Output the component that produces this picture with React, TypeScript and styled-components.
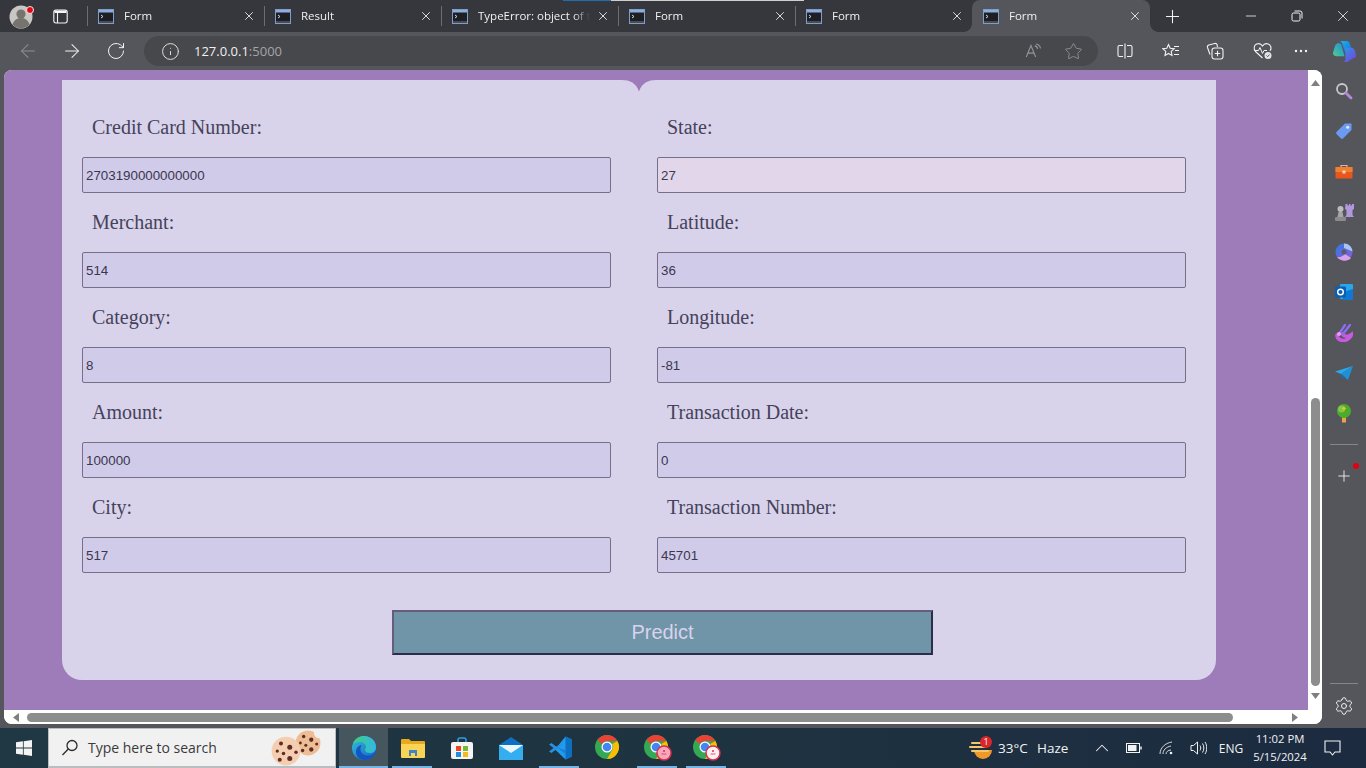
import React from 'react';
import styled, { createGlobalStyle, css } from 'styled-components';
import { ArrowLeft, ArrowRight, RotateCw, Info, Star, X, Plus, Minus, ChevronUp, Settings } from 'lucide-react';

const GlobalStyle = createGlobalStyle`
  html, body {
    margin: 0;
    padding: 0;
    width: 1366px;
    height: 768px;
    overflow: hidden;
    background: #55565b;
  }
  * { box-sizing: border-box; }
`;

const uiFont = `"Open Sans", "Noto Sans", "Liberation Sans", sans-serif`;

const Screen = styled.div`
  position: relative;
  width: 1366px;
  height: 768px;
  display: flex;
  flex-direction: column;
  font-family: ${uiFont};
  background: #55565b;
`;

const TabStrip = styled.div`
  height: 32px;
  display: flex;
  align-items: stretch;
  background: #36373c;
  flex: none;
`;

const LoadLine = styled.div`
  position: absolute;
  left: 563px;
  top: 0;
  width: 241px;
  height: 1px;
  background: linear-gradient(to right, #1d6fb0 0 48px, #cfcfcf 48px);
`;

const StripCell = styled.div<{ $w: number }>`
  width: ${(p) => p.$w}px;
  flex: none;
  display: flex;
  align-items: center;
  justify-content: center;
  color: #f2f2f2;
  position: relative;
`;

const PanelCell = styled(StripCell)`
  margin-right: 11px;
`;

const Spacer = styled.div`
  flex: 1;
`;

const activeFlares = css`
  &::before,
  &::after {
    content: '';
    position: absolute;
    bottom: 0;
    width: 8px;
    height: 8px;
  }
  &::before {
    left: -8px;
    background: radial-gradient(circle at 0 0, transparent 7.5px, #55565b 8px);
  }
  &::after {
    right: -8px;
    background: radial-gradient(circle at 100% 0, transparent 7.5px, #55565b 8px);
  }
`;

const tabDivider = css`
  &::before {
    content: '';
    position: absolute;
    left: 0;
    top: 6px;
    width: 1px;
    height: 20px;
    background: #6d6e72;
  }
`;

const Tab = styled.div<{ $active?: boolean }>`
  position: relative;
  flex: none;
  width: ${(p) => (p.$active ? 178 : 177)}px;
  display: flex;
  align-items: center;
  padding-left: 11px;
  color: #f0f0f0;
  background: ${(p) => (p.$active ? '#55565b' : 'transparent')};
  border-radius: ${(p) => (p.$active ? '8px 8px 0 0' : '0')};
  ${(p) => (p.$active ? activeFlares : tabDivider)}
`;

const TabTitle = styled.span`
  margin-left: 10px;
  width: 112px;
  font-size: 11.5px;
  line-height: 16px;
  white-space: nowrap;
  overflow: hidden;
  -webkit-mask-image: linear-gradient(to right, #000 85%, transparent);
  mask-image: linear-gradient(to right, #000 85%, transparent);
`;

const TabClose = styled.span`
  position: absolute;
  right: 8px;
  top: 9px;
  display: flex;
  color: #f0f0f0;
`;

const Toolbar = styled.div`
  height: 38px;
  display: flex;
  align-items: center;
  padding-left: 6px;
  background: #55565b;
  flex: none;
`;

const NavButton = styled.div<{ $muted?: boolean; $w?: number }>`
  width: ${(p) => p.$w ?? 44}px;
  height: 30px;
  flex: none;
  display: flex;
  align-items: center;
  justify-content: center;
  color: ${(p) => (p.$muted ? '#8e8f93' : '#f2f2f2')};
`;

const CopilotSlot = styled(NavButton)`
  padding-left: 10px;
`;

const Omnibox = styled.div`
  width: 954px;
  height: 30px;
  margin: 0 4px 0 6px;
  flex: none;
  display: flex;
  align-items: center;
  border-radius: 15px;
  background: #47484c;
  padding: 0 5px 0 17px;
`;

const InfoSlot = styled.span`
  display: flex;
  width: 33px;
  color: #e6e6e6;
`;

const Url = styled.span`
  font-size: 13px;
  color: #f0f0f0;
  flex: 1;
`;

const UrlPort = styled.span`
  color: #a4a5a8;
`;

const OmniIcon = styled.span`
  display: flex;
  justify-content: center;
  width: 40px;
  color: #949599;
`;

const Main = styled.div`
  flex: 1;
  min-height: 0;
  display: flex;
  padding-left: 4px;
`;

const Viewport = styled.div`
  width: 1318px;
  height: 654px;
  flex: none;
  display: grid;
  grid-template-columns: 1fr 14px;
  grid-template-rows: 1fr 14px;
  background: #ffffff;
  border-radius: 8px;
  overflow: hidden;
`;

const PageArea = styled.div`
  background: #9e7bb9;
  padding: 10px 0 0 58px;
  overflow: hidden;
`;

const Card = styled.form`
  position: relative;
  width: 1154px;
  height: 600px;
  padding: 37px 0 0 20px;
  background: #d8d3eb;
  border-radius: 0 0 20px 20px;
`;

const Notch = styled.svg`
  position: absolute;
  left: 560px;
  top: 0;
`;

const FieldGrid = styled.div`
  display: grid;
  grid-template-columns: 529px 529px;
  column-gap: 46px;
`;

const Field = styled.div`
  height: 95px;
  display: flex;
  flex-direction: column;
`;

const FieldLabel = styled.label`
  height: 22px;
  margin-bottom: 18px;
  padding-left: 10px;
  font-family: "Liberation Serif", "Times New Roman", serif;
  font-size: 20px;
  line-height: 20px;
  color: #45425a;
`;

const FieldInput = styled.input<{ $hover?: boolean }>`
  width: 529px;
  height: 36px;
  padding: 0 3px;
  font-family: "Liberation Sans", Arial, sans-serif;
  font-size: 13.33px;
  color: #3a364e;
  background: ${(p) => (p.$hover ? '#e2d7ea' : '#d1cbea')};
  border: 1px solid #757088;
  border-radius: 2px;
  outline: none;
`;

const PredictButton = styled.button`
  display: block;
  width: 541px;
  height: 45px;
  margin: 18px 0 0 310px;
  font-family: "Liberation Sans", Arial, sans-serif;
  font-size: 20px;
  color: #d8d3eb;
  background: #7094a8;
  border-style: solid;
  border-width: 2px;
  border-color: #655c7e #2c2d49 #2c2d49 #655c7e;
`;

const VScroll = styled.div`
  display: flex;
  flex-direction: column;
  align-items: center;
  padding: 9px 0 0;
  background: #ffffff;
`;

const VThumb = styled.div`
  width: 9px;
  height: 288px;
  margin: 311px 0 6px;
  background: #8d8d8d;
  border-radius: 5px;
`;

const HScroll = styled.div`
  display: flex;
  align-items: center;
  padding-left: 8px;
  background: #ffffff;
`;

const HThumb = styled.div`
  width: 1206px;
  height: 9px;
  margin: 0 58px 0 7px;
  background: #8d8d8d;
  border-radius: 5px;
`;

const Corner = styled.div`
  background: #ffffff;
`;

const Sidebar = styled.div`
  width: 44px;
  flex: none;
  height: 658px;
  display: flex;
  flex-direction: column;
  align-items: center;
  padding: 1px 0 2px;
`;

const SideItem = styled.div`
  position: relative;
  width: 44px;
  height: 40.25px;
  flex: none;
  display: flex;
  align-items: center;
  justify-content: center;
  color: #f0f0f0;
`;

const SideRule = styled.div<{ $bottom?: boolean }>`
  width: 28px;
  height: 1px;
  flex: none;
  background: #85868a;
  margin: ${(p) => (p.$bottom ? 'auto 0 2px' : '11px 0 11px')};
`;

const RedDot = styled.span`
  position: absolute;
  right: 7px;
  top: 7px;
  width: 6px;
  height: 6px;
  border-radius: 50%;
  background: #e3000f;
`;

const Taskbar = styled.div`
  height: 40px;
  flex: none;
  display: flex;
  align-items: stretch;
  background: linear-gradient(to right, #1f3843, #1e3340 50%, #1c2b40);
  color: #f2f2f2;
`;

const StartCell = styled.div`
  width: 48px;
  flex: none;
  display: flex;
  align-items: center;
  justify-content: center;
`;

const SearchBox = styled.div`
  width: 288px;
  flex: none;
  margin-right: 3px;
  display: flex;
  align-items: center;
  padding-left: 12px;
  background: #f1f1f1;
  border: 1px solid #b9bdc0;
  border-bottom-width: 2px;
  color: #3a3a3a;
  font-size: 14px;
`;

const SearchText = styled.span`
  margin-left: 9px;
  width: 183px;
  white-space: nowrap;
`;

const CookiesRow = styled.span`
  display: flex;
  align-items: flex-start;
  height: 36px;
`;

const FrontCookie = styled.span`
  z-index: 1;
  margin-top: 6px;
  display: flex;
`;

const BackCookie = styled.span`
  margin: 0 0 0 -6px;
  display: flex;
`;

const AppCell = styled.div<{ $open?: boolean; $active?: boolean }>`
  position: relative;
  width: 49px;
  flex: none;
  display: flex;
  align-items: center;
  justify-content: center;
  background: ${(p) => (p.$active ? '#46565f' : 'transparent')};
  &::after {
    content: '';
    display: ${(p) => (p.$open ? 'block' : 'none')};
    position: absolute;
    left: ${(p) => (p.$active ? 0 : 4)}px;
    right: ${(p) => (p.$active ? 0 : 5)}px;
    bottom: 0;
    height: 2px;
    background: #76b4e6;
  }
`;

const Tray = styled.div`
  margin-left: auto;
  display: flex;
  align-items: stretch;
  padding-right: 14px;
`;

const TrayCell = styled.div<{ $w: number }>`
  position: relative;
  width: ${(p) => p.$w}px;
  flex: none;
  display: flex;
  align-items: center;
  justify-content: center;
  font-size: 12px;
`;

const Weather = styled.div`
  width: 121px;
  flex: none;
  display: flex;
  align-items: center;
  font-size: 13.5px;
  padding-right: 2px;
`;

const WeatherTemp = styled.span`
  margin-left: 5px;
  width: 39px;
`;

const Clock = styled.div`
  width: 64px;
  flex: none;
  display: flex;
  flex-direction: column;
  align-items: center;
  justify-content: center;
  font-size: 11.3px;
  line-height: 18px;
`;

// ---- drawings ----

const Avatar = () => (
  <svg width="26" height="26" viewBox="0 0 26 26">
    <circle cx="12" cy="14" r="11.5" fill="#c9c7c4" />
    <circle cx="12" cy="11" r="4.6" fill="#77746f" />
    <path d="M3.5 21.5c1.5-5 5-6.5 8.5-6.5s7 1.500 8.500 6.500a11.500 11.500 0 0 1-17 0z" fill="#77746f" />
    <circle cx="21" cy="7" r="3.500" fill="#e30613" stroke="#f5e9e9" strokeWidth="1" />
  </svg>
);

const PanelIcon = () => (
  <svg width="15" height="15" viewBox="0 0 15 15" fill="none" stroke="#f4f4f4" strokeWidth="1.100">
    <rect x="0.800" y="1" width="13.400" height="13" rx="2.200" />
    <path d="M4.500 4v10" />
    <path d="M1.500 1.500h12V4h-12z" fill="#f4f4f4" stroke="none" />
  </svg>
);

const ConsoleIcon = () => (
  <svg width="16" height="15" viewBox="0 0 16 15">
    <rect x="0.500" y="0.500" width="15" height="14" fill="#1d1f24" stroke="#7f9fca" />
    <rect x="1" y="1" width="14" height="2.500" fill="#8eaede" />
    <path d="M3 6l2 1.500L3 9" fill="none" stroke="#e8e8e8" strokeWidth="0.900" />
    <path d="M1 12h14v2H1z" fill="#4a4c52" />
  </svg>
);

const RestoreIcon = () => (
  <svg width="12" height="12" viewBox="0 0 12 12" fill="none" stroke="#f2f2f2" strokeWidth="1">
    <rect x="1" y="3" width="8" height="8" rx="1.500" />
    <path d="M3.500 1h5.500a2 2 0 0 1 2 2v5.500" />
  </svg>
);

const ReadAloudIcon = () => (
  <svg width="17" height="16" viewBox="0 0 20 18" fill="none" stroke="#949599" strokeWidth="1.300">
    <path d="M1.500 16L7 2.500 12.500 16M3.500 11.500h7" />
    <path d="M11.500 3c2 .3 3 1.500 3.300 3.500M13 .8c3 .4 4.700 2.300 5.200 5" />
  </svg>
);

const SplitIcon = () => (
  <svg width="16" height="16" viewBox="0 0 16 16" fill="none" stroke="#f2f2f2" strokeWidth="1.100">
    <path d="M6 2.500H2.500a1.500 1.500 0 0 0-1.500 1.500v8a1.500 1.500 0 0 0 1.500 1.500H6M10 2.500h3.500A1.500 1.500 0 0 1 15 4v8a1.500 1.500 0 0 1-1.500 1.500H10M8 .5v15" />
  </svg>
);

const FavListIcon = () => (
  <svg width="18" height="16" viewBox="0 0 18 16" fill="none" stroke="#f2f2f2" strokeWidth="1.100">
    <path d="M6.500 1.500l1.700 3.700 4 .5-3 2.700.8 4-3.500-2-3.500 2 .8-4-3-2.700 4-.5z" />
    <path d="M12 3.500h5M13 7.500h4M12 11.500h5" />
  </svg>
);

const CollectionsIcon = () => (
  <svg width="18" height="18" viewBox="0 0 18 18" fill="none" stroke="#f2f2f2" strokeWidth="1.100">
    <path d="M4 12.500L1.500 5.500a2 2 0 0 1 1.300-2.500l6-1.500a2 2 0 0 1 2.300 1.200L11.500 5" />
    <rect x="6" y="6" width="11" height="11" rx="2.500" />
    <path d="M11.500 8.800v5.400M8.800 11.500h5.400" />
  </svg>
);

const HealthIcon = () => (
  <svg width="20" height="18" viewBox="0 0 20 18" fill="none">
    <path
      d="M9.500 16L2.500 9.500C.2 7 1 3 3.700 2c2.300-.8 4.500 0 5.800 2 1.300-2 3.500-2.800 5.800-2 2.700 1 3.500 4.500 1.700 7"
      stroke="#f2f2f2"
      strokeWidth="1.100"
    />
    <path d="M1.500 8.500h4l1.500-3 2.500 6 1.500-3h3" stroke="#f2f2f2" strokeWidth="1" />
    <circle cx="15" cy="13.500" r="3.500" fill="#e4e4e4" />
    <path d="M13.500 13.500l1.200 1.200 1.800-2.200" stroke="#55565b" strokeWidth="1" />
  </svg>
);

const DotsIcon = () => (
  <svg width="14" height="4" viewBox="0 0 14 4" fill="#f2f2f2">
    <circle cx="2" cy="2" r="1.200" />
    <circle cx="7" cy="2" r="1.200" />
    <circle cx="12" cy="2" r="1.200" />
  </svg>
);

const CopilotLogo = () => (
  <svg width="25" height="23" viewBox="0 0 26 24">
    <defs>
      <linearGradient id="cpA" x1="0" y1="0" x2="1" y2="1">
        <stop offset="0" stopColor="#1fb5e8" />
        <stop offset="1" stopColor="#1565e0" />
      </linearGradient>
      <linearGradient id="cpB" x1="0" y1="1" x2="1" y2="0">
        <stop offset="0" stopColor="#4fd08a" />
        <stop offset="1" stopColor="#1e88e5" />
      </linearGradient>
      <linearGradient id="cpC" x1="0" y1="0" x2="1" y2="1">
        <stop offset="0" stopColor="#2c9be8" />
        <stop offset="1" stopColor="#7a3be0" />
      </linearGradient>
    </defs>
    <path d="M8 1h7c2 0 3 1 3.600 3L22 14H14L10.500 3.500C10 2 9 1 8 1z" fill="url(#cpA)" />
    <path d="M7 3c1.500 0 2.500 1 3 2.500L13 17H5.500C2 17 .5 15 1.200 12.500L3.500 5.500C4 4 5.500 3 7 3z" fill="url(#cpB)" />
    <path d="M14 8h6.500c1.500 0 2.500 1 3 2.500l1.500 4.500c.6 2.200-.8 4-3 4l-6 4h-5c1.500 0 2.500-1 3-2.500z" fill="url(#cpC)" />
  </svg>
);

const ScrollArrow = ({ dir }: { dir: 'up' | 'down' | 'left' | 'right' }) => {
  const points = { up: '0,7 9,7 4.500,1', down: '0,1 9,1 4.500,7', left: '7,0 7,9 1,4.500', right: '1,0 1,9 7,4.500' };
  return (
    <svg width={dir === 'up' || dir === 'down' ? 9 : 8} height={dir === 'up' || dir === 'down' ? 8 : 9}>
      <polygon points={points[dir]} fill="#7f7f7f" />
    </svg>
  );
};

const SideSearch = () => (
  <svg width="18" height="18" viewBox="0 0 18 18" fill="none">
    <circle cx="7" cy="7" r="5" stroke="#c8c8cc" strokeWidth="1.800" />
    <path d="M11 11l5 5" stroke="#b388d8" strokeWidth="2.800" strokeLinecap="round" />
  </svg>
);

const SideTag = () => (
  <svg width="18" height="18" viewBox="0 0 18 18">
    <path d="M1.500 10L10 1.500h6.500V8L8 16.500a1.500 1.500 0 0 1-2 0L1.500 12a1.500 1.500 0 0 1 0-2z" fill="#6b9bf0" />
    <circle cx="12.700" cy="5.300" r="1.500" fill="#e6ecfa" />
  </svg>
);

const SideToolbox = () => (
  <svg width="18" height="15" viewBox="0 0 18 15">
    <path d="M6 3V1.500h6V3" fill="none" stroke="#d9b9a4" strokeWidth="1.200" />
    <rect x="0.500" y="3" width="17" height="11.500" rx="1" fill="#e8561d" />
    <rect x="0.500" y="3" width="17" height="5" fill="#f07f30" />
    <rect x="7.500" y="6.500" width="3" height="3" fill="#f8d5b8" />
  </svg>
);

const SideChess = () => (
  <svg width="19" height="18" viewBox="0 0 19 18">
    <path d="M10.500 1h2v1.500h1.500V1h1.500v1.500H17V1h2v5l-1.500 1v5l1.500 2H10l1.500-2V7L10 6z" fill="#b197dd" />
    <circle cx="5.500" cy="6" r="3" fill="#bdbdbd" />
    <path d="M3.500 9h4l1 5h-6z" fill="#a6a6a6" />
    <rect x="0" y="14" width="11" height="4" rx="1" fill="#8b8b8b" />
  </svg>
);

const SideCopilot = () => (
  <svg width="18" height="18" viewBox="0 0 18 18">
    <defs>
      <linearGradient id="scA" x1="0" y1="0" x2="1" y2="1">
        <stop offset="0" stopColor="#2f7be0" />
        <stop offset="1" stopColor="#8c5ae0" />
      </linearGradient>
    </defs>
    <circle cx="9" cy="9" r="8.500" fill="url(#scA)" />
    <path d="M9 .5c4.500 0 8 3 8.500 8L9 5z" fill="#a9c4f0" />
    <path d="M2 14c3 .5 6-.5 8-3l6 4c-3 3.500-10 4-14-1z" fill="#d9a3ea" />
    <circle cx="9" cy="9" r="2.500" fill="#5c5d62" />
  </svg>
);

const SideOutlook = () => (
  <svg width="18" height="18" viewBox="0 0 18 18">
    <rect x="5" y="1" width="13" height="15" rx="1" fill="#28a8ea" />
    <path d="M8 9l10-3v10a1 1 0 0 1-1 1H8z" fill="#0f78d4" />
    <rect x="0" y="3.500" width="11" height="11" rx="1" fill="#0a5fb4" />
    <circle cx="5.500" cy="9" r="2.800" fill="none" stroke="#ffffff" strokeWidth="1.400" />
  </svg>
);

const SideDesigner = () => (
  <svg width="18" height="19" viewBox="0 0 18 19" fill="none">
    <path d="M2 12c0 5 6 7 11 4 2-1.300 3-3 3.500-4.500-3 2-7 2.500-9-.5" stroke="#c85ae0" strokeWidth="3.600" strokeLinecap="round" />
    <path d="M4 11L10 2M8 11l7-9" stroke="#8b6df0" strokeWidth="2.400" strokeLinecap="round" />
    <circle cx="4" cy="11" r="2" fill="#e8a0f0" />
  </svg>
);

const SidePlane = () => (
  <svg width="18" height="14" viewBox="0 0 18 14">
    <path d="M0 5.500L18 0 6 8z" fill="#2aa8e8" />
    <path d="M18 0L6 8l7 6z" fill="#1f8fd8" />
    <path d="M6 8l1 5 2.500-2.500z" fill="#156fb0" />
  </svg>
);

const SideTree = () => (
  <svg width="16" height="19" viewBox="0 0 16 19">
    <rect x="6" y="12" width="4" height="6.500" fill="#e8a83a" />
    <circle cx="8" cy="7" r="7" fill="#4eaa2e" />
    <circle cx="5.500" cy="5" r="3.500" fill="#7cc84a" />
    <rect x="6.500" y="3" width="3" height="3" transform="rotate(45 8 4.500)" fill="#f2c21a" />
  </svg>
);

const WindowsLogo = () => (
  <svg width="16" height="16" viewBox="0 0 16 16" fill="#f4f4f4">
    <path d="M0 2.300L6.900 1.300V7.600H0zM7.700 1.200L16 0v7.600H7.700zM0 8.400h6.900v6.300L0 13.700zM7.700 8.400H16V16l-8.300-1.200z" />
  </svg>
);

const SearchGlass = () => (
  <svg width="18" height="18" viewBox="0 0 18 18" fill="none" stroke="#2c2c2c" strokeWidth="1.300">
    <circle cx="11" cy="6.500" r="5" />
    <path d="M7.300 10L1.500 16" />
  </svg>
);

const Cookie = ({ size, flip }: { size: number; flip?: boolean }) => (
  <svg width={size} height={size} viewBox="0 0 24 24">
    <circle cx="12" cy="12" r="11.500" fill={flip ? '#eebd95' : '#f5cdb0'} />
    {flip && <circle cx="22" cy="3" r="4.500" fill="#f1f1f1" />}
    <g fill="#5a2e25">
      <circle cx="8" cy="6" r="1.600" />
      <circle cx="15" cy="9" r="2" />
      <circle cx="5" cy="12" r="1.300" />
      <circle cx="10" cy="14" r="1.400" />
      <circle cx="7" cy="19" r="1.600" />
      <circle cx="15" cy="18" r="2" />
      <circle cx="20" cy="13" r="1.400" />
    </g>
  </svg>
);

const EdgeLogo = () => (
  <svg width="24" height="24" viewBox="0 0 24 24">
    <defs>
      <linearGradient id="edA" x1="0" y1="0" x2="1" y2="1">
        <stop offset="0" stopColor="#35c1d8" />
        <stop offset="1" stopColor="#1460c8" />
      </linearGradient>
      <linearGradient id="edB" x1="0" y1="0" x2="1" y2="0">
        <stop offset="0" stopColor="#3dd07a" />
        <stop offset="1" stopColor="#32b7e8" />
      </linearGradient>
    </defs>
    <circle cx="12" cy="12" r="12" fill="url(#edA)" />
    <path d="M1 8C3 2 8 0 12 0c7 0 12 5 12 11 0 4-3 6-6 6-3 0-5-1-5-3 0-1 1-1.500 1-3 0-3-3-5-6-5-3 0-6 1-7 2z" fill="url(#edB)" />
    <path d="M24 15c-1 5-6 9-11 9-5 0-9-3-9-8 0-4 3-7 6-7-1 1-1.500 2-1.500 4 0 4 3.500 6.500 7.500 6.500 3 0 6-1.500 8-4.500z" fill="#1455c0" />
  </svg>
);

const FolderLogo = () => (
  <svg width="24" height="20" viewBox="0 0 24 20">
    <path d="M0 2a1 1 0 0 1 1-1h7l2 2h13a1 1 0 0 1 1 1v3H0z" fill="#e8a91f" />
    <path d="M0 6h24v13a1 1 0 0 1-1 1H1a1 1 0 0 1-1-1z" fill="#fbd355" />
    <path d="M8 12h8v6h-2v-3h-4v3H8z" fill="#3a87c8" />
  </svg>
);

const StoreLogo = () => (
  <svg width="22" height="22" viewBox="0 0 22 22">
    <path d="M7 6V3a2 2 0 0 1 2-2h4a2 2 0 0 1 2 2v3" fill="none" stroke="#2f9fe0" strokeWidth="1.500" />
    <rect x="0" y="5" width="22" height="17" rx="2" fill="#f4f4f4" />
    <rect x="5" y="9" width="5" height="5" fill="#e8471f" />
    <rect x="12" y="9" width="5" height="5" fill="#7cb82f" />
    <rect x="5" y="15" width="5" height="5" fill="#1b8fe0" />
    <rect x="12" y="15" width="5" height="5" fill="#f5b81f" />
  </svg>
);

const MailLogo = () => (
  <svg width="24" height="23" viewBox="0 0 24 23">
    <path d="M12 0l12 8v3H0V8z" fill="#0f6fc0" />
    <rect x="0" y="8" width="24" height="15" fill="#35aef0" />
    <path d="M0 8h24L12 16z" fill="#eaf5fc" />
  </svg>
);

const CodeLogo = () => (
  <svg width="24" height="24" viewBox="0 0 24 24">
    <path d="M17.500 0.500L24 3.500v17l-6.500 3L7 13.500l10.500-13z" fill="#1f9cf0" />
    <path d="M17.500 0.500V23.500L24 20.500v-17z" fill="#0d6fc0" />
    <path d="M17.500 6.500L8 13.500l-4.500 3.500L1 15.500l4.500-3.500L1 8.500 3.500 7l4.500 3.500z" fill="#2a8fe0" />
    <path d="M8 10.500L17.500 18v-3.500L11 12z" fill="#1a7fd4" />
  </svg>
);

const ChromeLogo = ({ badge }: { badge?: 'filled' | 'light' }) => (
  <svg width="28" height="26" viewBox="0 0 28 26">
    <circle cx="12" cy="12" r="12" fill="#34a853" />
    <path d="M12 0a12 12 0 0 1 10.400 6H12a6 6 0 0 0-5.200 3L2.300 5C4.500 2 8 0 12 0z" fill="#ea4335" />
    <path d="M22.400 6A12 12 0 0 1 12 24l5.200-9a6 6 0 0 0 0-6z" fill="#fbbc05" />
    <circle cx="12" cy="12" r="5.500" fill="#ffffff" />
    <circle cx="12" cy="12" r="4.300" fill="#4285f4" />
    {badge && (
      <g>
        <circle cx="20" cy="18" r="7" fill={badge === 'filled' ? '#f7a8bd' : '#fff0f2'} stroke="#d9304f" strokeWidth="1.500" />
        <circle cx="20" cy="16" r="1" fill="#d9304f" />
        <path d="M17.500 19h5" stroke="#d9304f" strokeWidth="0.800" />
      </g>
    )}
  </svg>
);

const WeatherBadge = () => (
  <svg width="26" height="26" viewBox="0 0 26 26">
    <path d="M7 15h18a9 9 0 0 1-18 0z" fill="#f0982a" />
    <path d="M5 8h11M3 12h15M5 16h16" stroke="#f5c76a" strokeWidth="2" strokeLinecap="round" />
    <circle cx="19" cy="7" r="6" fill="#d8262c" />
    <text x="19" y="10" fontSize="9" fontFamily="Open Sans, sans-serif" textAnchor="middle" fill="#ffffff">1</text>
  </svg>
);

const BatteryIcon = () => (
  <svg width="16" height="12" viewBox="0 0 16 12" fill="none" stroke="#f2f2f2" strokeWidth="1">
    <rect x="0.500" y="1.500" width="13" height="9" />
    <rect x="2" y="3" width="8.500" height="6" fill="#f2f2f2" stroke="none" />
    <path d="M15 4.500v3" strokeWidth="1.500" />
  </svg>
);

const WifiIcon = () => (
  <svg width="16" height="14" viewBox="0 0 16 14" fill="none" stroke="#d6d9dc" strokeWidth="1">
    <path d="M1 13C1 7 6 2 13 1M4 13c0-4 3-7 8-8M7 13c0-2 2-4 5-4" />
    <circle cx="12" cy="12" r="1.300" fill="#f2f2f2" stroke="none" />
  </svg>
);

const VolumeIcon = () => (
  <svg width="17" height="14" viewBox="0 0 17 14" fill="none" stroke="#f2f2f2" strokeWidth="1">
    <path d="M1 4.500h2.500L7.500 1v12l-4-3.500H1zM10 4.500c1 1.500 1 3.500 0 5M12.500 2.500c1.800 2.500 1.800 6.500 0 9M15 1c2.300 3.500 2.300 8.500 0 12" />
  </svg>
);

const NoteIcon = () => (
  <svg width="17" height="16" viewBox="0 0 17 16" fill="none" stroke="#f2f2f2" strokeWidth="1.100">
    <path d="M1 1h15v11h-5l-2.500 3L6 12H1z" />
  </svg>
);

// ---- data ----

const tabs = ['Form', 'Result', 'TypeError: object of t', 'Form', 'Form'];

const fields = [
  { label: 'Credit Card Number:', value: '2703190000000000' },
  { label: 'State:', value: '27', hover: true },
  { label: 'Merchant:', value: '514' },
  { label: 'Latitude:', value: '36' },
  { label: 'Category:', value: '8' },
  { label: 'Longitude:', value: '-81' },
  { label: 'Amount:', value: '100000' },
  { label: 'Transaction Date:', value: '0' },
  { label: 'City:', value: '517' },
  { label: 'Transaction Number:', value: '45701' },
];

const sideIcons = [SideSearch, SideTag, SideToolbox, SideChess, SideCopilot, SideOutlook, SideDesigner, SidePlane, SideTree];

const App: React.FC = () => {
  return (
    <Screen>
      <GlobalStyle />
      <TabStrip>
        <StripCell $w={44}>
          <Avatar />
        </StripCell>
        <PanelCell $w={32}>
          <PanelIcon />
        </PanelCell>
        {tabs.map((title, i) => (
          <Tab key={i}>
            <ConsoleIcon />
            <TabTitle>{title}</TabTitle>
            <TabClose>
              <X size={14} strokeWidth={1.5} />
            </TabClose>
          </Tab>
        ))}
        <Tab $active>
          <ConsoleIcon />
          <TabTitle>Form</TabTitle>
          <TabClose>
            <X size={14} strokeWidth={1.5} />
          </TabClose>
        </Tab>
        <StripCell $w={44}>
          <Plus size={21} strokeWidth={1.2} />
        </StripCell>
        <Spacer />
        <StripCell $w={46}>
          <Minus size={16} strokeWidth={1.2} />
        </StripCell>
        <StripCell $w={46}>
          <RestoreIcon />
        </StripCell>
        <StripCell $w={46}>
          <X size={18} strokeWidth={1.1} />
        </StripCell>
      </TabStrip>
      <LoadLine />

      <Toolbar>
        <NavButton $muted>
          <ArrowLeft size={22} strokeWidth={1.1} />
        </NavButton>
        <NavButton>
          <ArrowRight size={22} strokeWidth={1.1} />
        </NavButton>
        <NavButton>
          <RotateCw size={20} strokeWidth={1.2} />
        </NavButton>
        <Omnibox>
          <InfoSlot>
            <Info size={19} strokeWidth={1.2} />
          </InfoSlot>
          <Url>
            127.0.0.1<UrlPort>:5000</UrlPort>
          </Url>
          <OmniIcon>
            <ReadAloudIcon />
          </OmniIcon>
          <OmniIcon>
            <Star size={19} strokeWidth={1.1} />
          </OmniIcon>
        </Omnibox>
        <NavButton $w={46}>
          <SplitIcon />
        </NavButton>
        <NavButton $w={46}>
          <FavListIcon />
        </NavButton>
        <NavButton $w={42}>
          <CollectionsIcon />
        </NavButton>
        <NavButton $w={54}>
          <HealthIcon />
        </NavButton>
        <NavButton $w={22}>
          <DotsIcon />
        </NavButton>
        <CopilotSlot $w={54}>
          <CopilotLogo />
        </CopilotSlot>
      </Toolbar>

      <Main>
        <Viewport>
          <PageArea>
            <Card onSubmit={(e) => e.preventDefault()}>
              <Notch width="34" height="12" viewBox="0 0 34 12">
                <path d="M0 0C8 0 14 3 17 11.500C20 3 26 0 34 0Z" fill="#9e7bb9" />
              </Notch>
              <FieldGrid>
                {fields.map((f) => (
                  <Field key={f.label}>
                    <FieldLabel>{f.label}</FieldLabel>
                    <FieldInput $hover={f.hover} defaultValue={f.value} />
                  </Field>
                ))}
              </FieldGrid>
              <PredictButton type="submit">Predict</PredictButton>
            </Card>
          </PageArea>
          <VScroll>
            <ScrollArrow dir="up" />
            <VThumb />
            <ScrollArrow dir="down" />
          </VScroll>
          <HScroll>
            <ScrollArrow dir="left" />
            <HThumb />
            <ScrollArrow dir="right" />
          </HScroll>
          <Corner />
        </Viewport>
        <Sidebar>
          {sideIcons.map((Icon, i) => (
            <SideItem key={i}>
              <Icon />
            </SideItem>
          ))}
          <SideRule />
          <SideItem>
            <Plus size={18} strokeWidth={1.2} />
            <RedDot />
          </SideItem>
          <SideRule $bottom />
          <SideItem>
            <Settings size={20} strokeWidth={1.2} />
          </SideItem>
        </Sidebar>
      </Main>

      <Taskbar>
        <StartCell>
          <WindowsLogo />
        </StartCell>
        <SearchBox>
          <SearchGlass />
          <SearchText>Type here to search</SearchText>
          <CookiesRow>
            <FrontCookie>
              <Cookie size={30} />
            </FrontCookie>
            <BackCookie>
              <Cookie size={26} flip />
            </BackCookie>
          </CookiesRow>
        </SearchBox>
        <AppCell $open $active>
          <EdgeLogo />
        </AppCell>
        <AppCell $open>
          <FolderLogo />
        </AppCell>
        <AppCell>
          <StoreLogo />
        </AppCell>
        <AppCell>
          <MailLogo />
        </AppCell>
        <AppCell $open>
          <CodeLogo />
        </AppCell>
        <AppCell>
          <ChromeLogo />
        </AppCell>
        <AppCell $open>
          <ChromeLogo badge="filled" />
        </AppCell>
        <AppCell $open>
          <ChromeLogo badge="light" />
        </AppCell>
        <Tray>
          <Weather>
            <WeatherBadge />
            <WeatherTemp>33°C</WeatherTemp>
            <span>Haze</span>
          </Weather>
          <TrayCell $w={28}>
            <ChevronUp size={22} strokeWidth={1.1} />
          </TrayCell>
          <TrayCell $w={36}>
            <BatteryIcon />
          </TrayCell>
          <TrayCell $w={30}>
            <WifiIcon />
          </TrayCell>
          <TrayCell $w={32}>
            <VolumeIcon />
          </TrayCell>
          <TrayCell $w={34}>ENG</TrayCell>
          <Clock>
            <span>11:02 PM</span>
            <span>5/15/2024</span>
          </Clock>
          <TrayCell $w={40}>
            <NoteIcon />
          </TrayCell>
        </Tray>
      </Taskbar>
    </Screen>
  );
};

export default App;
